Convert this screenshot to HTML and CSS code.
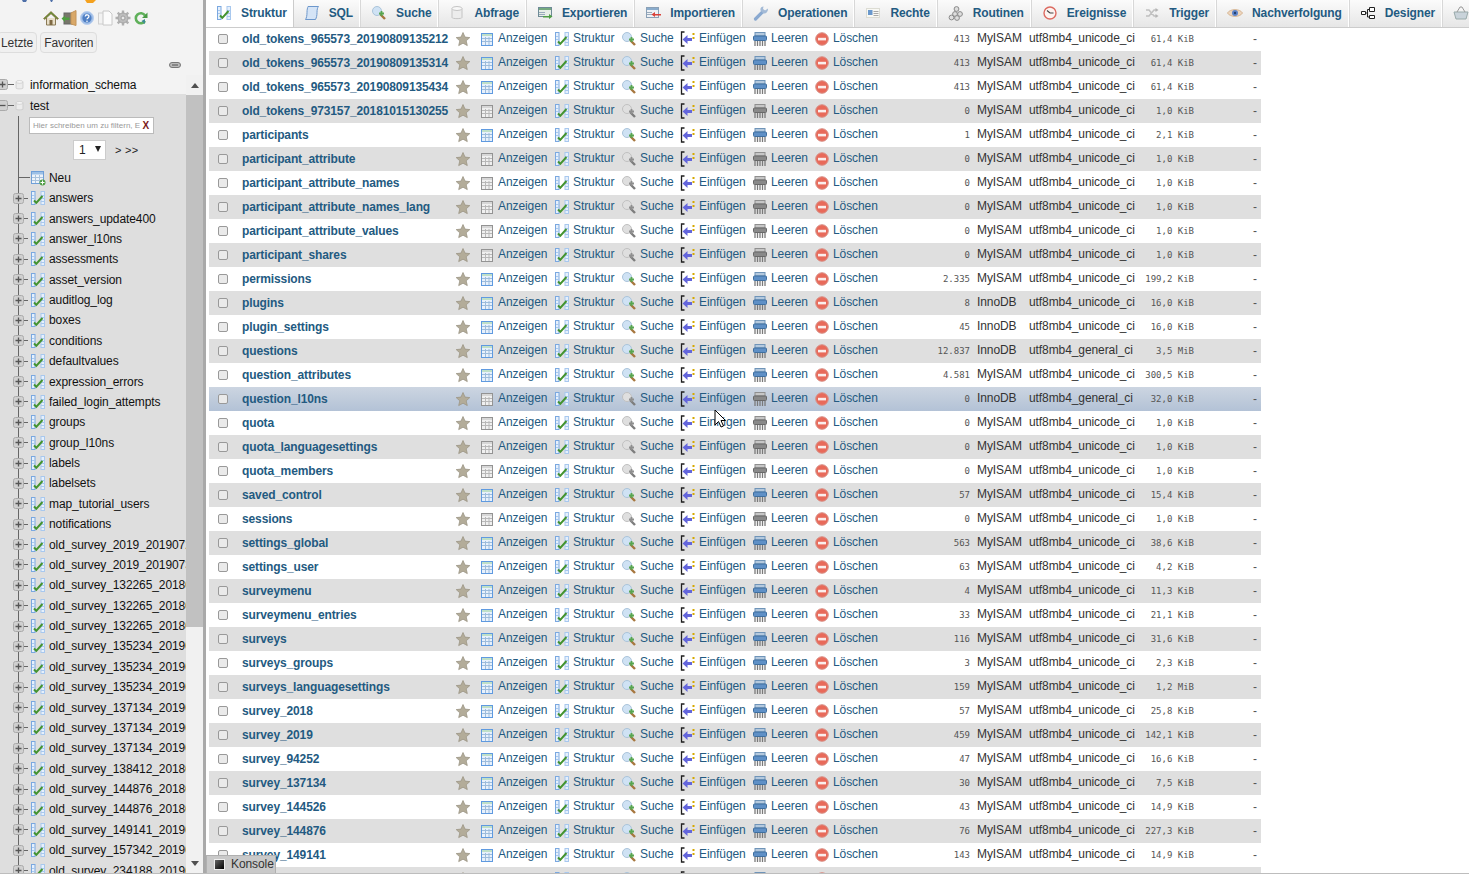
FILE: index.html
```html
<!DOCTYPE html>
<html lang="de">
<head>
<meta charset="utf-8">
<title>phpMyAdmin</title>
<link rel="stylesheet" href="styles.css">
</head>
<body>
<svg class="defs" xmlns="http://www.w3.org/2000/svg">
  <symbol id="star" viewBox="0 0 16 16"><path d="M8 1.500l2 4.600 4.800.5-3.600 3.200 1.100 4.800L8 12.200l-4.300 2.400 1.100-4.800L1.200 6.600 6 6.100z" fill="#b3ac99" stroke="#9c9585" stroke-width=".8"/></symbol>
  <symbol id="anz" viewBox="0 0 16 16"><rect x="2.500" y="2.500" width="11" height="12" fill="#e8f1fc" stroke="#5f9ae0"/><rect x="3" y="3" width="10" height="2" fill="#bfe0c8"/><path d="M3 7.500h10M3 10.500h10M6.500 6v8M10 6v8" stroke="#9dbcdc"/></symbol>
  <symbol id="props" viewBox="0 0 16 16"><rect x="1.500" y="1.500" width="3.500" height="13" fill="#e6f0fc" stroke="#7aa8e0"/><rect x="11" y="1.500" width="3.500" height="13" fill="#e6f0fc" stroke="#a8c8ee"/><path d="M2 5.500h3M2 8.500h3M11 5.500h3M11 8.500h3M11 11.500h3" stroke="#a8c8ee"/><path d="M4 10.500l2.300 2.300L12.500 6" fill="none" stroke="#43932f" stroke-width="2"/></symbol>
  <symbol id="srch" viewBox="0 0 16 16"><path d="M8.500 8.500l5.500 5.500" stroke="#a7773f" stroke-width="2.400"/><circle cx="6" cy="6" r="4.500" fill="#cfe2f4" stroke="#aac4da"/><path d="M10.500 6v5M8 8.500h5" stroke="#58a650" stroke-width="1.800"/></symbol>
  <symbol id="ins" viewBox="0 0 16 16"><path d="M4.500 1H1.500v14h3" fill="none" stroke="#1e1e1e" stroke-width="1.300"/><path d="M2.500 8.500l5-4.500v3h4.500v3H7.500v3z" fill="#6466dc"/><path d="M12.500 2h2v2h-2zM12.500 6h2v2h-2z" fill="#d6a800"/></symbol>
  <symbol id="empty" viewBox="0 0 16 16"><rect x="3" y="1.500" width="10" height="3.500" fill="#b4c9de" stroke="#6f94b8"/><rect x="1.500" y="5" width="13" height="4.500" rx="1" fill="#5f90c6" stroke="#3f6f9f"/><path d="M3 10v5M5.500 10v5M8 10v5M10.500 10v5M13 10v5" stroke="#7a7a7a" stroke-width="1.300"/></symbol>
  <symbol id="del" viewBox="0 0 16 16"><circle cx="8" cy="8" r="6.300" fill="#e86a5a" stroke="#d8938a"/><rect x="4" y="6.800" width="8" height="2.600" fill="#fbeeec"/></symbol>
  <symbol id="sql" viewBox="0 0 16 16"><path d="M4 1.500h10.500c-1 1-1.500 3-1.500 6s-.5 5-1.500 7H1.500c1-1.500 1.500-4 1.500-7S3.500 3 4 1.500z" fill="#d5e4f6" stroke="#6c97cc"/></symbol>
  <symbol id="db" viewBox="0 0 16 16"><path d="M3 3.500v9c0 1.500 10 1.500 10 0v-9" fill="#ececec" stroke="#c4c4c4"/><ellipse cx="8" cy="3.500" rx="5" ry="2" fill="#f8f8f8" stroke="#c4c4c4"/></symbol>
  <symbol id="exp" viewBox="0 0 16 16"><rect x="1.500" y="2.500" width="13" height="9" fill="#e6eee6" stroke="#6e8a96"/><rect x="2" y="3" width="12" height="2" fill="#74a97f"/><path d="M2 7.500h6M2 9.500h6" stroke="#9ab"/><path d="M6 11h6V9l3.500 2.500L12 14v-1.500H6z" fill="#4f9d45"/></symbol>
  <symbol id="imp" viewBox="0 0 16 16"><rect x="1.500" y="2.500" width="12" height="10" fill="#eef1f5" stroke="#8aa0b6"/><rect x="2" y="3" width="11" height="2" fill="#8aaccc"/><path d="M2 7.500h5M2 9.500h5" stroke="#9ab"/><path d="M16 9h-6V7L6.500 9.500 10 12v-1.500h6z" fill="#d9423a"/></symbol>
  <symbol id="wrench" viewBox="0 0 16 16"><path d="M2.500 14L10 6.500" stroke="#8aa9d0" stroke-width="3.200" stroke-linecap="round"/><path d="M15 3.500l-3 2-2-1.500.5-2.500c-2 0-3.500 1.500-3 4l3 3c2.500.5 4.800-1.500 4.500-5z" fill="#a3bad6"/></symbol>
  <symbol id="card" viewBox="0 0 16 16"><rect x="1.500" y="3.500" width="13" height="9" fill="#f8f8f4" stroke="#dcdcd3"/><rect x="3" y="5" width="4.500" height="5" fill="#6a98cc"/><path d="M8.500 6.500h5M8.500 8.500h5M8.500 10.500h5" stroke="#a8a8a8"/></symbol>
  <symbol id="rout" viewBox="0 0 16 16"><g fill="#dedede" stroke="#8a8a8a"><circle cx="8.500" cy="4" r="2.400"/><circle cx="12" cy="9" r="2.400"/><circle cx="7" cy="9" r="2.400"/><circle cx="3.500" cy="12.500" r="2.400"/><circle cx="9" cy="13" r="2.400"/></g></symbol>
  <symbol id="clock" viewBox="0 0 16 16"><circle cx="8" cy="8" r="6" fill="#fdf3f0" stroke="#dc6a60" stroke-width="1.400"/><path d="M8 8L5 5.500M8 8h3.500" stroke="#444" stroke-width="1.100"/></symbol>
  <symbol id="trig" viewBox="0 0 16 16"><path d="M2 5h3l5 6h2M2 11h3l5-6h2" fill="none" stroke="#c0c0c0" stroke-width="1.500"/><path d="M11.500 3l3 2-3 2zM11.500 9l3 2-3 2z" fill="#b4b4b4"/></symbol>
  <symbol id="eye" viewBox="0 0 16 16"><path d="M.5 8C3 3.500 13 3.500 15.500 8 13 12.500 3 12.500.5 8z" fill="#edd5bd" stroke="#d6b593"/><circle cx="8" cy="8" r="3" fill="#5c83c9"/><circle cx="8" cy="8" r="1.200" fill="#24406e"/></symbol>
  <symbol id="design" viewBox="0 0 16 16"><path d="M1.500 6.500h4v3h-4zM9.500 2.500h5v4h-5zM9.500 10.500h5v3h-5zM5.500 8h2M7.500 4.500v7.500M7.500 4.500h2M7.500 12h2" fill="#fff" stroke="#222"/></symbol>
  <symbol id="basket" viewBox="0 0 16 16"><path d="M1 7h14l-2 7H3z" fill="#c9d3da" stroke="#9aa"/><path d="M4 7l3-5h2l3 5" fill="none" stroke="#999"/></symbol>
  <symbol id="home" viewBox="0 0 16 16"><path d="M3.500 8v7h9V8" fill="#e8dfc9" stroke="#8a7a55"/><rect x="6.500" y="10" width="3" height="5" fill="#7f6a44"/><path d="M.5 8.500L8 1.500l7.500 7-1.200 1L8 3.800 1.700 9.500z" fill="#5f9438" stroke="#8d5a2b" stroke-width=".6"/></symbol>
  <symbol id="exit" viewBox="0 0 16 16"><rect x="3" y="3" width="8" height="11" fill="#77776a" stroke="#666"/><path d="M10 14V3l5-2.500v15L10 14z" fill="#d9a868" stroke="#c4955a"/><path d="M.5 8.500l3.500-3v2h4.500v2.500H4v2z" fill="#4e9d3f"/></symbol>
  <symbol id="help" viewBox="0 0 16 16"><circle cx="8" cy="8" r="6.500" fill="#9dbce6" stroke="#b9cff0"/><circle cx="8" cy="8" r="4.600" fill="#4f7fc4"/><path d="M6.200 6.500c.3-2.400 3.900-2.200 3.700 0 0 1.400-1.900 1.500-1.900 2.800" fill="none" stroke="#fff" stroke-width="1.300"/><circle cx="8" cy="11.200" r=".8" fill="#fff"/></symbol>
  <symbol id="doc" viewBox="0 0 16 16"><rect x="1.500" y="3" width="7" height="11" fill="#f2f2f2" stroke="#d0d0d0"/><path d="M6 1h6l3 3v11H6z" fill="#fbfbfb" stroke="#c8c8c8"/></symbol>
  <symbol id="gear" viewBox="0 0 16 16"><path d="M8 .5v15M.5 8h15M2.700 2.700l10.600 10.600M13.300 2.700L2.700 13.300" stroke="#b0b0b0" stroke-width="2.400"/><circle cx="8" cy="8" r="5" fill="#bdbdbd" stroke="#a6a6a6"/><circle cx="8" cy="8" r="2" fill="#e8e8e8" stroke="#a0a0a0"/></symbol>
  <symbol id="reload" viewBox="0 0 16 16"><path d="M12 5.500A5 5 0 1 0 12 11" fill="none" stroke="#5fb05a" stroke-width="2.600"/><path d="M14.500 2.500v5.500H9z" fill="#4a9c46"/><path d="M8.500 11l3.500-2v5z" fill="#3d8c94"/></symbol>
  <symbol id="neu" viewBox="0 0 16 16"><rect x="1.500" y="1.500" width="12" height="12" fill="#edf3fa" stroke="#6f9fd8"/><rect x="2" y="2" width="11" height="2.500" fill="#9cc0e6"/><path d="M2 7.500h11M2 10.500h11M5.500 5v8M9.500 5v8" stroke="#a8c2dc"/><circle cx="12.500" cy="12.500" r="3" fill="#4f9d45"/><path d="M12.500 10.500v4M10.500 12.500h4" stroke="#fff"/></symbol>
  <symbol id="plus" viewBox="0 0 11 11"><rect x=".5" y=".5" width="10" height="10" rx="2" fill="#d0d0d0" stroke="#aaa"/><path d="M2.500 5.500h6M5.500 2.500v6" stroke="#555" stroke-width="1.300"/></symbol>
  <symbol id="minus" viewBox="0 0 11 11"><rect x=".5" y=".5" width="10" height="10" rx="2" fill="#d0d0d0" stroke="#aaa"/><path d="M2.500 5.500h6" stroke="#555" stroke-width="1.300"/></symbol>
</svg>

<div class="app">
  <aside class="side">
    <svg class="logo" viewBox="0 0 203 3"><path d="M22 0h5l-1 2h-3zM50 0h3l-1 2h-1z" fill="#4e6fa8"/><path d="M85 0h11l-3 3h-6z" fill="#f4a11e"/></svg>
    <nav class="quick">
      <svg class="ic16"><use href="#home"/></svg>
      <svg class="ic16"><use href="#exit"/></svg>
      <svg class="ic16"><use href="#help"/></svg>
      <svg class="ic16"><use href="#doc"/></svg>
      <svg class="ic16"><use href="#gear"/></svg>
      <svg class="ic16"><use href="#reload"/></svg>
    </nav>
    <div class="recent">
      <button class="btn">Letzte</button>
      <button class="btn">Favoriten</button>
    </div>
    <div class="linkrow">
      <svg class="chain" viewBox="0 0 12 6"><rect x=".5" y=".5" width="11" height="5" rx="2.500" fill="#bbb" stroke="#777"/><path d="M3 3h6" stroke="#555"/></svg>
    </div>
    <div class="pane">
      <div class="tree">
        <div class="db">
          <svg class="box"><use href="#plus"/></svg><i class="dash"></i>
          <svg class="cyl"><use href="#db"/></svg><span>information_schema</span>
        </div>
        <div class="cur">
          <div class="db dbcur">
            <svg class="box"><use href="#minus"/></svg><i class="dash"></i>
            <svg class="cyl"><use href="#db"/></svg><span>test</span>
          </div>
          <div class="kids">
            <div class="filter"><span class="ph">Hier schreiben um zu filtern, E</span><b class="x">X</b></div>
            <div class="pager"><span class="sel"><span>1</span><i class="tri"></i></span><span class="nxt">&gt; &gt;&gt;</span></div>
            <ul class="tlist" id="tlist">
              <li class="newt"><i class="hl"></i><svg class="tic"><use href="#neu"/></svg><span>Neu</span></li>
            </ul>
          </div>
        </div>
      </div>
      <div class="sbar">
        <i class="up"></i>
        <div class="thumb"></div>
        <i class="down"></i>
      </div>
    </div>
  </aside>

  <main class="main">
    <nav class="tabs">
      <a class="tab on"><svg class="ic16"><use href="#props"/></svg>Struktur</a>
      <a class="tab"><svg class="ic16"><use href="#sql"/></svg>SQL</a>
      <a class="tab"><svg class="ic16"><use href="#srch"/></svg>Suche</a>
      <a class="tab"><svg class="ic16"><use href="#db"/></svg>Abfrage</a>
      <a class="tab"><svg class="ic16"><use href="#exp"/></svg>Exportieren</a>
      <a class="tab"><svg class="ic16"><use href="#imp"/></svg>Importieren</a>
      <a class="tab"><svg class="ic16"><use href="#wrench"/></svg>Operationen</a>
      <a class="tab"><svg class="ic16"><use href="#card"/></svg>Rechte</a>
      <a class="tab"><svg class="ic16"><use href="#rout"/></svg>Routinen</a>
      <a class="tab"><svg class="ic16"><use href="#clock"/></svg>Ereignisse</a>
      <a class="tab"><svg class="ic16"><use href="#trig"/></svg>Trigger</a>
      <a class="tab"><svg class="ic16"><use href="#eye"/></svg>Nachverfolgung</a>
      <a class="tab"><svg class="ic16"><use href="#design"/></svg>Designer</a>
      <a class="tab"><svg class="ic16"><use href="#basket"/></svg></a>
    </nav>
    <div class="content">
      <table class="tbl">
        <colgroup><col><col><col><col><col><col><col><col><col><col><col><col><col><col></colgroup>
        <tbody id="rows"></tbody>
      </table>
    </div>
    <div class="console"><i class="cicon"></i>Konsole</div>
  </main>
</div>
<svg class="cursor" viewBox="0 0 12 20"><path d="M1 1v15l3.500-3.500L7 18l2.500-1-2.500-5.500h4.500z" fill="#fff" stroke="#000"/></svg>
<script src="script.js"></script>
</body>
</html>
```

FILE: styles.css
```css
* { box-sizing: border-box; }
html, body { margin: 0; height: 100%; overflow: hidden; background: #fff; }
body { font: 12px/1 "Liberation Sans", Arial, sans-serif; color: #333; letter-spacing: -0.09px; }
.defs { position: absolute; width: 0; height: 0; }
.app { display: flex; height: 874px; border-bottom: 1px solid #bdbdbd; }
.ic16 { width: 16px; height: 16px; flex: none; display: block; }

/* sidebar */
.side { width: 206px; flex: none; display: flex; flex-direction: column; background: #f3f3f3; border-right: 3px solid #a9a9a9; overflow: hidden; }
.logo { display: block; width: 203px; height: 3px; flex: none; }
.quick { display: flex; gap: 2px; padding: 7px 0 0 43px; height: 29px; flex: none; }
.recent { display: flex; gap: 3px; margin-left: -3px; flex: none; }
.btn { height: 21px; padding: 0 3px; border: 1px solid #ddd; border-radius: 4px; background: #f0f0f0; font: 12px "Liberation Sans", Arial, sans-serif; letter-spacing: -0.09px; color: #333; }
.linkrow { display: flex; justify-content: flex-end; padding: 9px 22px 0 0; height: 22px; flex: none; }
.chain { width: 12px; height: 6px; display: block; }
.pane { flex: 1; display: flex; min-height: 0; }
.tree { width: 186px; flex: none; overflow: hidden; color: #111; }
.db { display: flex; align-items: center; height: 19px; white-space: nowrap; }
.dbcur { height: 22px; padding-top: 1px; }
.box { width: 11px; height: 11px; margin-left: -3px; flex: none; }
.dash { width: 6px; height: 1px; background: #666; flex: none; }
.cyl { width: 11px; height: 16px; flex: none; margin-right: 5px; }
.cur { background: #dedede; height: 100%; }
.kids { background: linear-gradient(#666, #666) 18px 0 / 1px 100% no-repeat; padding-top: 1px; height: 100%; }
.filter { margin-left: 29px; width: 125px; height: 17px; background: #fff; border: 1px solid #bbb; display: flex; align-items: center; justify-content: space-between; padding: 0 4px 0 3px; }
.ph { font-size: 8px; color: #999; width: 108px; overflow: hidden; white-space: nowrap; letter-spacing: 0; }
.x { font-size: 10px; color: #7b1c1c; }
.pager { display: flex; align-items: center; margin: 6px 0 0 73px; height: 20px; }
.sel { width: 33px; height: 20px; background: #fff; border: 1px solid #ccc; display: flex; align-items: center; justify-content: space-between; padding: 0 4px 0 5px; font-size: 12px; color: #222; }
.tri { width: 0; height: 0; border: 3.500px solid transparent; border-top: 6px solid #222; border-bottom: 0; margin-bottom: 2px; }
.nxt { margin-left: 9px; font-size: 11px; letter-spacing: .3px; color: #222; }
.tlist { list-style: none; margin: 7.600px 0 0; padding: 0; }
.tlist li { display: flex; align-items: center; height: 20.375px; white-space: nowrap; }
.hl { width: 11px; height: 1px; background: #666; margin-left: 19px; flex: none; }
.newt .tic { margin-left: 0; }
.tic { width: 16px; height: 16px; flex: none; margin: 0 3px 0 2px; }
.tlist .box { margin-left: 13px; }
.tlist .dash { width: 4px; }
.sbar { width: 17px; flex: none; background: #f1f1f1; display: flex; flex-direction: column; align-items: center; }
.thumb { width: 100%; height: 532px; margin-top: 7px; background: #c1c1c1; }
.up, .down { width: 0; height: 0; border: 4px solid transparent; flex: none; }
.up { border-top: 0; border-bottom: 5px solid #505050; margin-top: 8px; }
.down { border-bottom: 0; border-top: 5px solid #505050; margin-top: auto; margin-bottom: 7px; }

/* main */
.main { flex: 1; min-width: 0; display: flex; flex-direction: column; position: relative; overflow: hidden; }
.tabs { display: flex; height: 28px; flex: none; background: linear-gradient(#fbfbfb, #e6e6e6); border-bottom: 1px solid #ccc; position: relative; z-index: 1; overflow: hidden; }
.tab { display: flex; align-items: center; gap: 9px; padding: 0 7px 2px 10px; height: 28px; border-right: 1px solid #d8d8d8; box-shadow: inset -1px 0 0 #fff; font-weight: bold; letter-spacing: -0.12px; color: #235a81; white-space: nowrap; flex: none; }
.tab.on { background: #fff; height: 29px; border-right-color: #ccc; box-shadow: none; padding: 0 6px 3px 10px; }
.content { padding-left: 3px; margin-top: -1px; overflow: hidden; flex: 1; }
.tbl { table-layout: fixed; width: 1052px; border-collapse: collapse; }
col:nth-child(1) { width: 29px; } col:nth-child(2) { width: 214px; } col:nth-child(3) { width: 24px; }
col:nth-child(4) { width: 75px; } col:nth-child(5) { width: 67px; } col:nth-child(6) { width: 59px; }
col:nth-child(7) { width: 72px; } col:nth-child(8) { width: 62px; } col:nth-child(9) { width: 69px; }
col:nth-child(10) { width: 94px; } col:nth-child(11) { width: 52px; } col:nth-child(12) { width: 114px; }
col:nth-child(13) { width: 57px; } col:nth-child(14) { width: 64px; }
.tbl tr { height: 24px; background: #fff; }
.tbl tr:nth-child(even) { background: #dfdfdf; }
.tbl tr.hover { background: linear-gradient(#ccd5e1, #b3c2d6); }
.tbl td, .tbl th { padding: 0; white-space: nowrap; overflow: hidden; }
.cb { appearance: none; display: block; width: 10px; height: 10px; margin: 0 0 0 9px; background: #eaeaea; border: 1px solid #999; border-radius: 2px; }
.tbl th { text-align: left; padding-left: 4px; color: #235a81; font-weight: bold; letter-spacing: -0.125px; }
.st { display: block; width: 16px; height: 16px; margin-left: 3px; }
.act { display: flex; align-items: center; gap: 3px; color: #235a81; padding: 0 0 2px 3px; height: 24px; }
.act svg { width: 16px; height: 16px; flex: none; margin-top: 2px; }
.off svg { filter: grayscale(1); }
.num { text-align: right; padding-right: 4px !important; font: 9px "DejaVu Sans Mono", monospace; letter-spacing: 0; color: #555; }
.eng { padding: 0 0 2px 3px !important; color: #333; }
.size { text-align: right; padding-right: 3px !important; font: 9px "DejaVu Sans Mono", monospace; letter-spacing: 0; color: #555; }
.dash2 { text-align: right; padding-right: 4px !important; color: #555; }
.console { position: absolute; left: 0; bottom: 0; width: 70px; height: 18px; background: #c9c9c9; border: 1px solid #b0b0b0; border-bottom: 0; display: flex; align-items: center; gap: 6px; padding: 0 0 2px 7px; color: #333; z-index: 2; }
.cicon { width: 11px; height: 11px; background: linear-gradient(135deg, #666, #000); border: 1px solid #eee; flex: none; margin-top: 2px; }
.cursor { position: absolute; left: 714px; top: 409px; width: 12px; height: 20px; z-index: 5; }
```

FILE: script.js
```js
const U = 'utf8mb4_unicode_ci', G = 'utf8mb4_general_ci', M = 'MyISAM', I = 'InnoDB';
const rows = [
  ['old_tokens_965573_20190809135212','413',M,U,'61,4 KiB'],
  ['old_tokens_965573_20190809135314','413',M,U,'61,4 KiB'],
  ['old_tokens_965573_20190809135434','413',M,U,'61,4 KiB'],
  ['old_tokens_973157_20181015130255','0',M,U,'1,0 KiB'],
  ['participants','1',M,U,'2,1 KiB'],
  ['participant_attribute','0',M,U,'1,0 KiB'],
  ['participant_attribute_names','0',M,U,'1,0 KiB'],
  ['participant_attribute_names_lang','0',M,U,'1,0 KiB'],
  ['participant_attribute_values','0',M,U,'1,0 KiB'],
  ['participant_shares','0',M,U,'1,0 KiB'],
  ['permissions','2.335',M,U,'199,2 KiB'],
  ['plugins','8',I,U,'16,0 KiB'],
  ['plugin_settings','45',I,U,'16,0 KiB'],
  ['questions','12.837',I,G,'3,5 MiB'],
  ['question_attributes','4.581',M,U,'300,5 KiB'],
  ['question_l10ns','0',I,G,'32,0 KiB'],
  ['quota','0',M,U,'1,0 KiB'],
  ['quota_languagesettings','0',M,U,'1,0 KiB'],
  ['quota_members','0',M,U,'1,0 KiB'],
  ['saved_control','57',M,U,'15,4 KiB'],
  ['sessions','0',M,U,'1,0 KiB'],
  ['settings_global','563',M,U,'38,6 KiB'],
  ['settings_user','63',M,U,'4,2 KiB'],
  ['surveymenu','4',M,U,'11,3 KiB'],
  ['surveymenu_entries','33',M,U,'21,1 KiB'],
  ['surveys','116',M,U,'31,6 KiB'],
  ['surveys_groups','3',M,U,'2,3 KiB'],
  ['surveys_languagesettings','159',M,U,'1,2 MiB'],
  ['survey_2018','57',M,U,'25,8 KiB'],
  ['survey_2019','459',M,U,'142,1 KiB'],
  ['survey_94252','47',M,U,'16,6 KiB'],
  ['survey_137134','30',M,U,'7,5 KiB'],
  ['survey_144526','43',M,U,'14,9 KiB'],
  ['survey_144876','76',M,U,'227,3 KiB'],
  ['survey_149141','143',M,U,'14,9 KiB'],
  ['survey_157342','12',M,U,'4,1 KiB']
];
const act = (id, label, off) =>
  `<td class="${off ? 'off' : ''}"><a class="act"><svg><use href="#${id}"/></svg>${label}</a></td>`;
document.getElementById('rows').innerHTML = rows.map(([n, c, e, k, s]) => {
  const z = c === '0';
  return `<tr class="${n === 'question_l10ns' ? 'hover' : ''}">
    <td><input type="checkbox" class="cb"></td><th>${n}</th>
    <td><svg class="st"><use href="#star"/></svg></td>
    ${act('anz', 'Anzeigen', z)}${act('props', 'Struktur')}${act('srch', 'Suche', z)}
    ${act('ins', 'Einfügen')}${act('empty', 'Leeren', z)}${act('del', 'Löschen')}
    <td class="num">${c}</td><td class="eng">${e}</td><td class="eng">${k}</td>
    <td class="size">${s}</td><td class="dash2">-</td></tr>`;
}).join('');

const tables = ['answers','answers_update400','answer_l10ns','assessments','asset_version','auditlog_log','boxes','conditions','defaultvalues','expression_errors','failed_login_attempts','groups','group_l10ns','labels','labelsets','map_tutorial_users','notifications',
  'old_survey_2019_20190729','old_survey_2019_20190730','old_survey_132265_20180412','old_survey_132265_20180611','old_survey_132265_20180704','old_survey_135234_20190215','old_survey_135234_20190321','old_survey_135234_20190528','old_survey_137134_20190109','old_survey_137134_20190226','old_survey_137134_20190403','old_survey_138412_20180917','old_survey_144876_20180523','old_survey_144876_20180809','old_survey_149141_20190121','old_survey_157342_20190314','old_survey_234188_20190611'];
document.getElementById('tlist').insertAdjacentHTML('beforeend', tables.map(t =>
  `<li><svg class="box"><use href="#plus"/></svg><i class="dash"></i><svg class="tic"><use href="#props"/></svg><span>${t}</span></li>`
).join(''));
```
